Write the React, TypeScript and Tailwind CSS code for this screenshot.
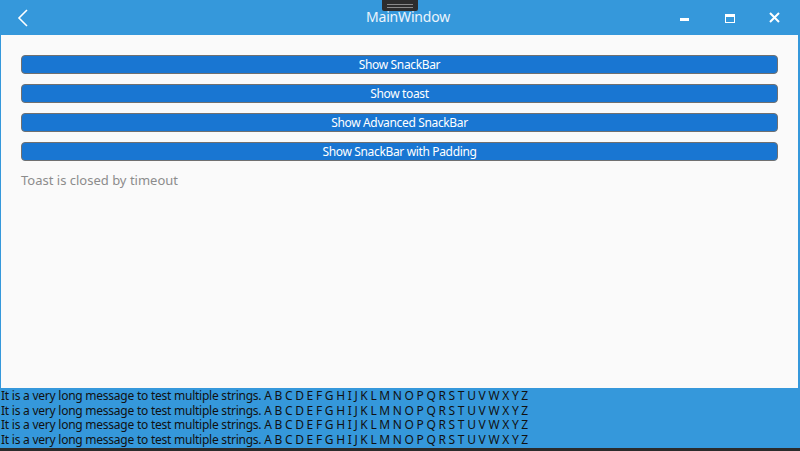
import React from "react";

const buttons = [
  "Show SnackBar",
  "Show toast",
  "Show Advanced SnackBar",
  "Show SnackBar with Padding",
];

const message =
  "It is a very long message to test multiple strings. A B C D E F G H I J K L M N O P Q R S T U V W X Y Z";

export default function App() {
  return (
    <div className="w-[800px] h-[451px] flex flex-col bg-[#3598db] overflow-hidden font-['Noto_Sans',sans-serif]">
      {/* title bar */}
      <div className="relative h-[35px] shrink-0 flex items-center">
        <svg className="ml-[17px] mt-[1px]" width="12" height="18" viewBox="0 0 12 18">
          <path d="M10 1 L2 9 L10 17" fill="none" stroke="#fff" strokeWidth="1.6" />
        </svg>
        <div className="absolute left-1/2 -translate-x-1/2 top-[8px] text-[14px] leading-[18px] text-[#eaf4fc] ml-[8px] tracking-[-0.2px]">
          MainWindow
        </div>
        {/* drag handle */}
        <div className="absolute left-[382px] top-0 w-[36px] h-[11px] bg-[#2d2d2d] rounded-b-[2px] flex flex-col items-center justify-center gap-[2px]">
          <div className="w-[26px] h-px bg-[#8a8a8a]" />
          <div className="w-[26px] h-px bg-[#8a8a8a]" />
        </div>
        <div className="ml-auto flex items-center h-full">
          <div className="w-[45px] h-full flex items-end justify-center pb-[14px]">
            <div className="w-[9px] h-[3px] bg-white" />
          </div>
          <div className="w-[45px] h-full flex items-center justify-center">
            <div className="w-[10px] h-[9px] border border-white border-t-[3px] mt-[1px]" />
          </div>
          <div className="w-[45px] h-full flex items-center justify-center mr-[3px]">
            <svg width="11" height="11" viewBox="0 0 11 11">
              <path d="M1 1 L10 10 M10 1 L1 10" stroke="#fff" strokeWidth="2" />
            </svg>
          </div>
        </div>
      </div>

      {/* content */}
      <div className="ml-px mr-[2px] h-[353px] shrink-0 bg-[#fafafa] px-[20px] pt-[20px]">
        <div className="flex flex-col gap-[10px]">
          {buttons.map((b) => (
            <div
              key={b}
              className="h-[19px] rounded-[4px] border border-[#707070] bg-[#1976d2] text-white text-[12px] leading-[17px] text-center tracking-[-0.35px]"
            >
              {b}
            </div>
          ))}
        </div>
        <div className="mt-[10px] text-[13px] leading-[18px] text-[#8c8c8c]">
          Toast is closed by timeout
        </div>
      </div>

      {/* snackbar */}
      <div className="h-[60px] shrink-0 pl-px pt-[1px] text-[12px] leading-[14.5px] text-[#111] whitespace-nowrap tracking-[-0.24px]">
        <div>{message}</div>
        <div>{message}</div>
        <div>{message}</div>
        <div>{message}</div>
      </div>
      <div className="flex-1 bg-[#2b2b2b]" />
    </div>
  );
}
